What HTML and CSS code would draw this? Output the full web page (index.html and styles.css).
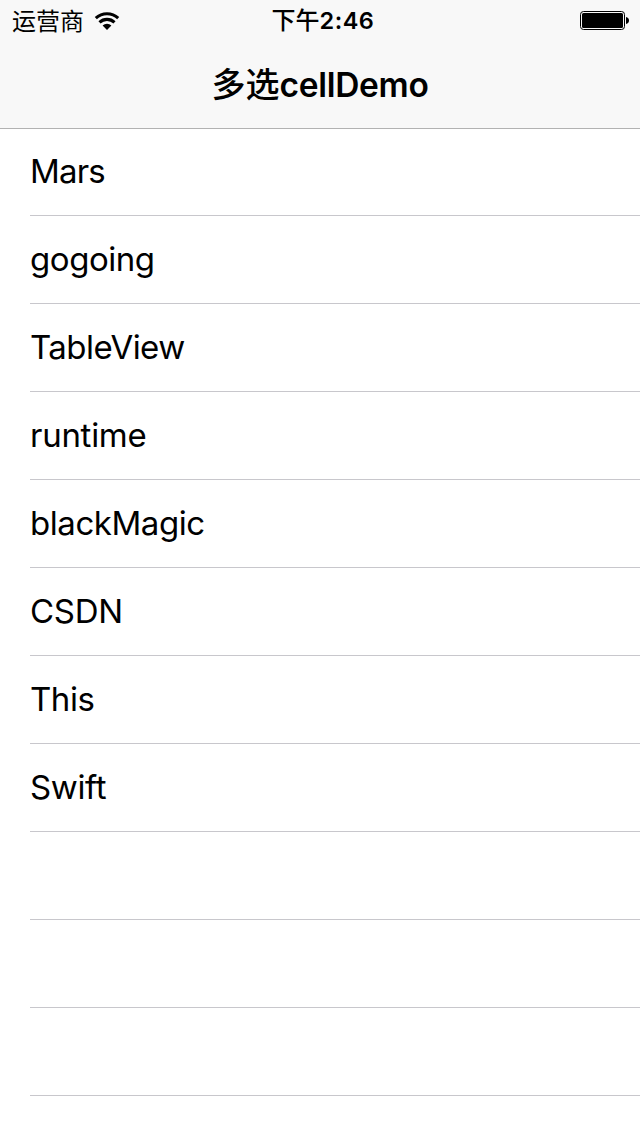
FILE: index.html
```html
<!DOCTYPE html>
<html lang="zh">
<head>
<meta charset="utf-8">
<title>多选cellDemo</title>
<link rel="stylesheet" href="styles.css">
</head>
<body>
<header class="header">
<div class="status">
<div class="carrier"><span class="carrier-name">运营商</span>
<svg class="wifi" width="26" height="20" viewBox="0 0 26 20"><path d="M1.8 7.2a16.5 16.5 0 0 1 22.4 0M5.5 11.3a11 11 0 0 1 15 0" fill="none" stroke="#000" stroke-width="3.1"/><path d="M8.6 14.4a6.5 6.5 0 0 1 8.8 0L13 18.9z"/></svg></div>
<div class="time">下午<span class="digits">2:46</span></div>
<svg class="battery" width="50" height="20" viewBox="0 0 50 20"><rect x=".5" y=".5" width="44" height="18" rx="3" fill="none" stroke="#000"/><rect x="2" y="2" width="41" height="15" rx="1.5"/><path d="M46 6q3 .7 3 3.5t-3 3.5z"/></svg>
</div>
<h1 class="title"><span class="title-cjk">多选</span><span class="title-latin">cellDemo</span></h1>
</header>
<main class="list">
<div class="row"><span class="label mars">Mars</span></div>
<div class="row"><span class="label gogoing">gogoing</span></div>
<div class="row"><span class="label tableview">TableView</span></div>
<div class="row"><span class="label runtime">runtime</span></div>
<div class="row"><span class="label magic">blackMagic</span></div>
<div class="row"><span class="label csdn">CSDN</span></div>
<div class="row"><span class="label this">This</span></div>
<div class="row"><span class="label swift">Swift</span></div>
<div class="row"></div>
<div class="row"></div>
<div class="row"></div>
</main>
</body>
</html>
```
FILE: styles.css
```css
* { box-sizing: border-box; }
body { margin: 0; height: 1136px; overflow: hidden; background: #fff; color: #000; font-family: Inter, "Noto Sans CJK SC", sans-serif; }
.header { height: 129px; background: #f8f8f8; border-bottom: 1px solid #b2b2b2; }
.status { height: 42px; padding: 0 10px 0 12px; display: grid; grid-template-columns: 1fr auto 1fr; grid-template-rows: 42px; align-items: center; }
.carrier { display: flex; align-items: center; gap: 10px; font-size: 24px; line-height: 42px; }
.carrier-name { line-height: 40px; padding-top: 2px; }
.wifi { margin-top: -1px; }
.time { font-size: 24px; line-height: 42px; font-weight: 500; padding-left: 4px; white-space: nowrap; }
.digits { font-weight: 600; font-size: 23.5px; letter-spacing: .5px; }
.battery { justify-self: end; }
.title { margin: 0; height: 86px; line-height: 86px; font-size: 34px; font-weight: 600; text-align: center; white-space: nowrap; }
.title-cjk { font-weight: 500; }
.title-latin { font-size: 33.5px; letter-spacing: -.3px; }
.list { padding-left: 30px; }
.row { height: 88px; border-bottom: 1px solid #c8c7cc; display: flex; align-items: center; }
.row:first-child { height: 87px; }
.label { font-size: 33px; line-height: 40px; padding-bottom: 1px; letter-spacing: -.45px; }
.mars { letter-spacing: -.8px; padding-bottom: 2px; }
.tableview { letter-spacing: -.55px; }
.runtime, .csdn { letter-spacing: -.27px; }
.swift { letter-spacing: -.35px; }
```
